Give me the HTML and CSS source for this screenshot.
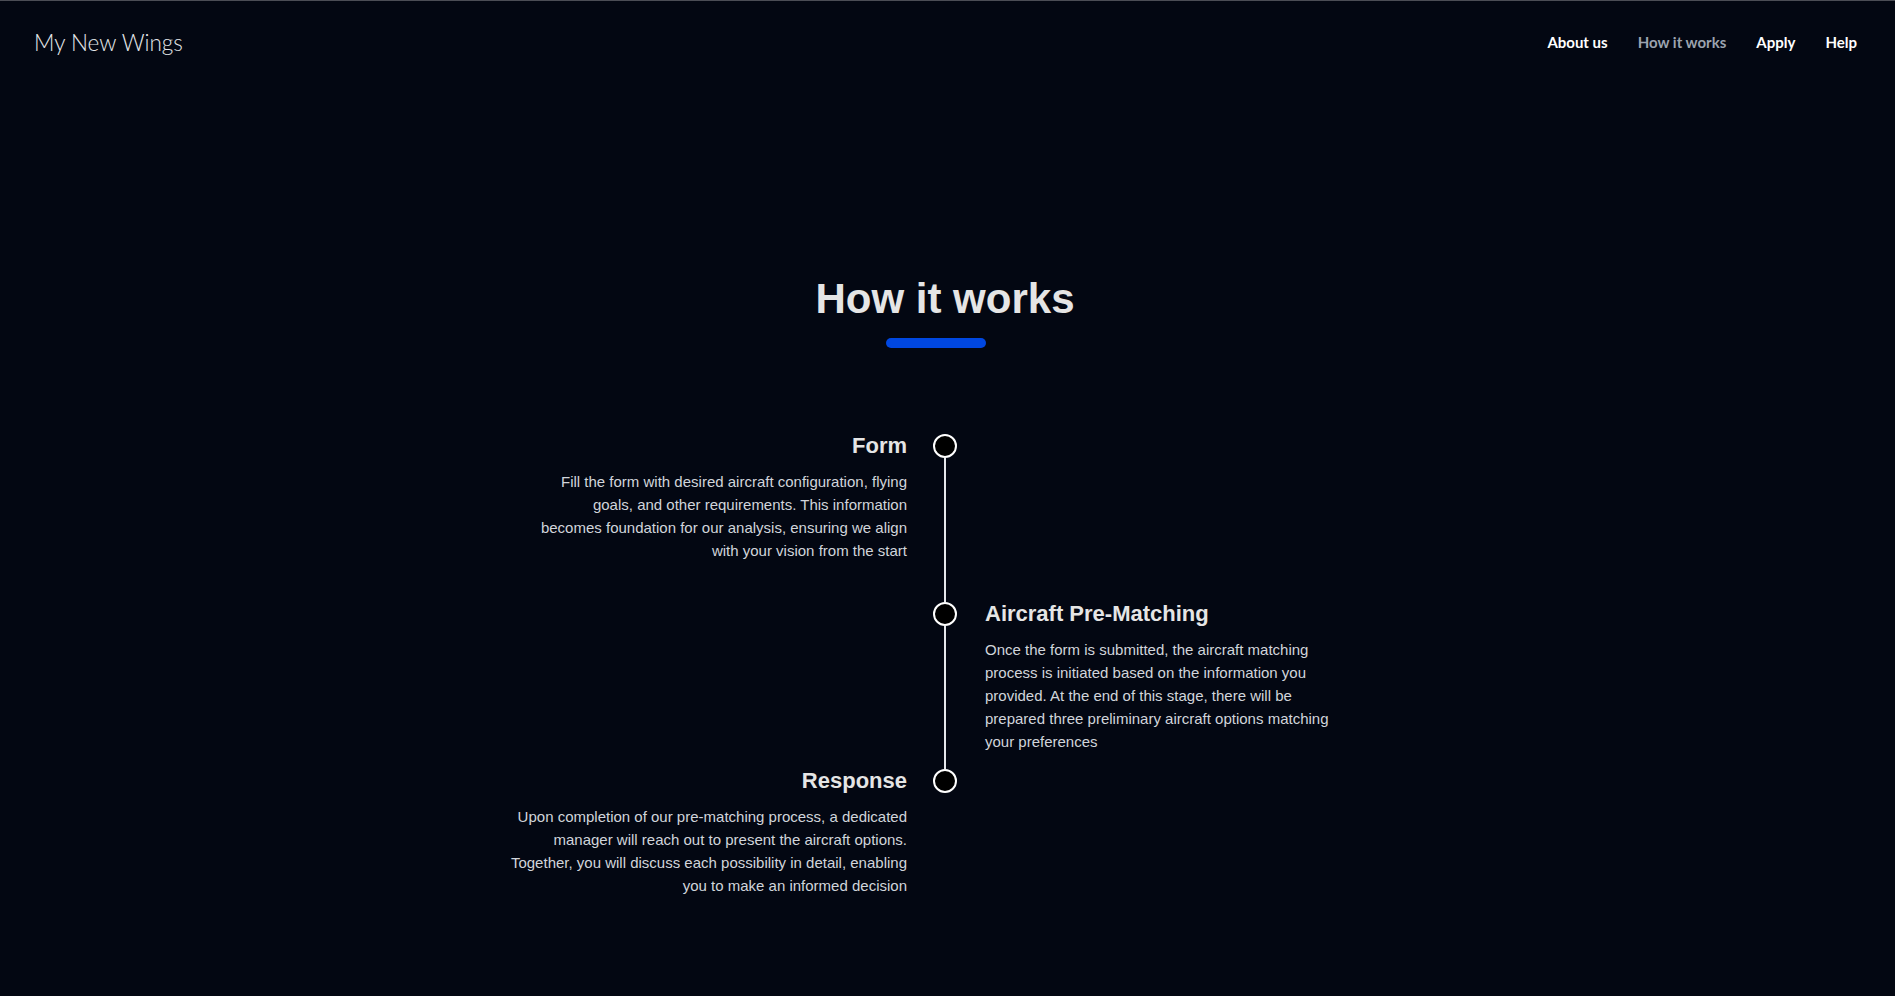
FILE: index.html
```html
<!DOCTYPE html>
<html lang="en">
<head>
<meta charset="utf-8">
<title>How it works — My New Wings</title>
<link rel="stylesheet" href="styles.css">
</head>
<body>
<header class="site-header">
  <a class="logo" href="#">My New Wings</a>
  <nav class="nav">
    <a class="nav-link" href="#">About us</a>
    <a class="nav-link nav-link--active" href="#">How it works</a>
    <a class="nav-link" href="#">Apply</a>
    <a class="nav-link" href="#">Help</a>
  </nav>
</header>
<main class="how">
  <h1 class="how-title">How it works</h1>
  <div class="how-bar"></div>
  <div class="timeline">
    <div class="tl-cell tl-left">
      <h2 class="tl-heading">Form</h2>
      <p class="tl-text tl-text--form">Fill the form with desired aircraft configuration, flying goals, and other requirements. This information becomes foundation for our analysis, ensuring we align with your vision from the start</p>
    </div>
    <div class="tl-mark"><span class="tl-dot"></span><span class="tl-line"></span></div>
    <div class="tl-cell tl-right"></div>

    <div class="tl-cell tl-left"></div>
    <div class="tl-mark"><span class="tl-dot"></span><span class="tl-line"></span></div>
    <div class="tl-cell tl-right">
      <h2 class="tl-heading">Aircraft Pre-Matching</h2>
      <p class="tl-text tl-text--match">Once the form is submitted, the aircraft matching process is initiated based on the information you provided. At the end of this stage, there will be prepared three preliminary aircraft options matching your preferences</p>
    </div>

    <div class="tl-cell tl-left">
      <h2 class="tl-heading">Response</h2>
      <p class="tl-text tl-text--response">Upon completion of our pre-matching process, a dedicated manager will reach out to present the aircraft options. Together, you will discuss each possibility in detail, enabling you to make an informed decision</p>
    </div>
    <div class="tl-mark tl-mark--last"><span class="tl-dot"></span></div>
    <div class="tl-cell tl-right"></div>
  </div>
</main>
</body>
</html>
```
FILE: styles.css
```css
html, body {
  margin: 0;
  padding: 0;
}
body {
  background: #030712;
  color: #e5e7eb;
  font-family: "Liberation Sans", Arial, sans-serif;
  min-height: 996px;
  border-top: 1px solid #4b4d55;
  box-sizing: border-box;
}
.site-header {
  height: 82px;
  display: flex;
  align-items: center;
  justify-content: space-between;
  padding: 0 38px 0 34px;
}
.logo {
  font-family: "Lato", "Noto Sans", sans-serif;
  font-weight: 300;
  font-size: 22.5px;
  color: #e5e7eb;
  text-decoration: none;
}
.nav {
  display: flex;
  gap: 30px;
}
.nav-link {
  font-family: "Lato", "Noto Sans", sans-serif;
  font-weight: 700;
  font-size: 15px;
  color: #ffffff;
  text-decoration: none;
}
.nav-link--active {
  color: #9ca3af;
}
.how {
  display: flex;
  flex-direction: column;
  align-items: center;
  padding-top: 192px;
}
.how-title {
  margin: 0 5px 0 0;
  font-size: 42px;
  font-weight: 700;
  line-height: 48px;
  color: #e5e5e5;
}
.how-bar {
  align-self: flex-start;
  margin-left: calc(50% - 61.5px);
  margin-top: 15px;
  width: 100px;
  height: 10px;
  border-radius: 5px;
  background: #0047e1;
}
.timeline {
  margin-top: 85px;
  display: grid;
  grid-template-columns: 430px 24px 435px;
  grid-template-rows: 168px 167px auto;
}
.tl-left {
  padding-right: 26px;
  text-align: right;
  display: flex;
  flex-direction: column;
  align-items: flex-end;
}
.tl-right {
  padding-left: 28px;
}
.tl-heading {
  margin: 0 0 12px;
  font-size: 22px;
  line-height: 25px;
  font-weight: 700;
  color: #e5e5e5;
}
.tl-text {
  margin: 0;
  font-size: 15px;
  line-height: 23px;
  color: #d1d5db;
}
.tl-text--form {
  max-width: 370px;
}
.tl-text--match {
  max-width: 365px;
}
.tl-text--response {
  max-width: 404px;
}
.tl-mark {
  display: flex;
  flex-direction: column;
  align-items: center;
  padding-top: 1px;
}
.tl-dot {
  width: 24px;
  height: 24px;
  box-sizing: border-box;
  border: 2px solid #ffffff;
  border-radius: 50%;
  background: #000000;
  flex: none;
}
.tl-line {
  flex: 1;
  width: 2px;
  background: #e5e7eb;
  margin-bottom: -1px;
}
```
